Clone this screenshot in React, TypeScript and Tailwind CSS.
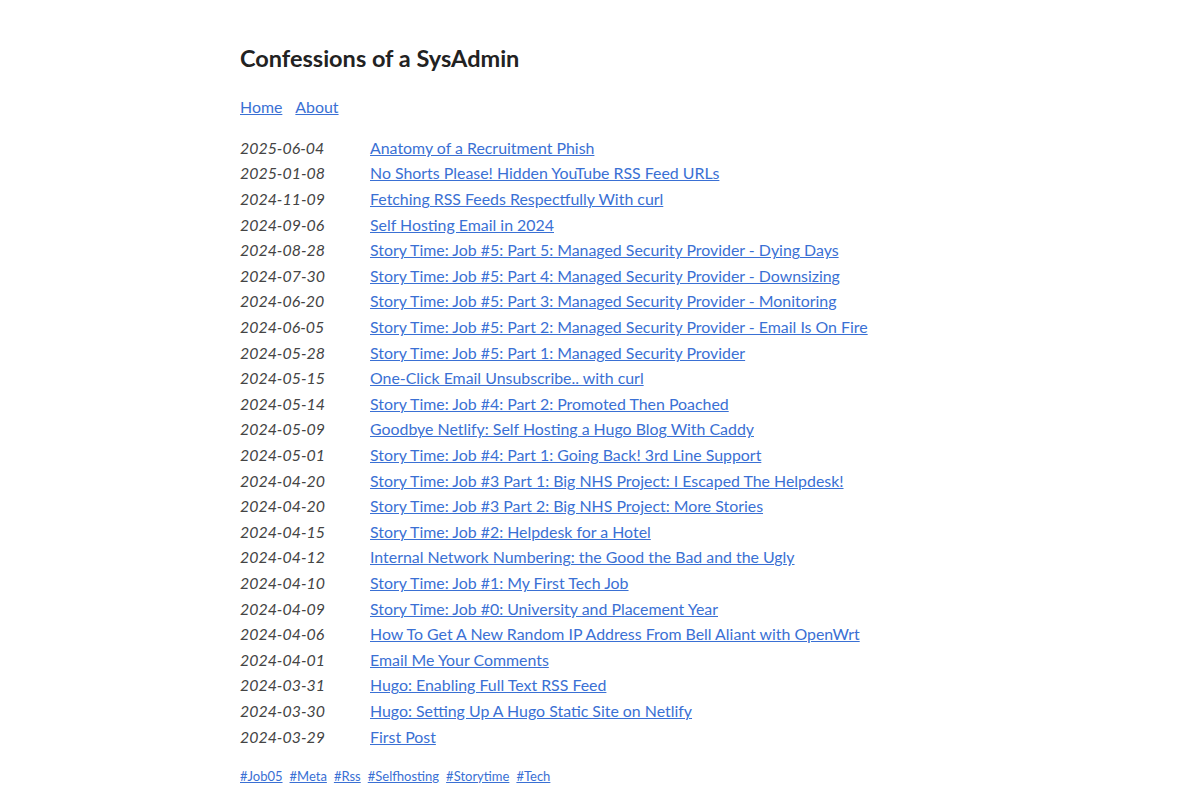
const posts: [string, string][] = [
  ["2025-06-04", "Anatomy of a Recruitment Phish"],
  ["2025-01-08", "No Shorts Please! Hidden YouTube RSS Feed URLs"],
  ["2024-11-09", "Fetching RSS Feeds Respectfully With curl"],
  ["2024-09-06", "Self Hosting Email in 2024"],
  ["2024-08-28", "Story Time: Job #5: Part 5: Managed Security Provider - Dying Days"],
  ["2024-07-30", "Story Time: Job #5: Part 4: Managed Security Provider - Downsizing"],
  ["2024-06-20", "Story Time: Job #5: Part 3: Managed Security Provider - Monitoring"],
  ["2024-06-05", "Story Time: Job #5: Part 2: Managed Security Provider - Email Is On Fire"],
  ["2024-05-28", "Story Time: Job #5: Part 1: Managed Security Provider"],
  ["2024-05-15", "One-Click Email Unsubscribe.. with curl"],
  ["2024-05-14", "Story Time: Job #4: Part 2: Promoted Then Poached"],
  ["2024-05-09", "Goodbye Netlify: Self Hosting a Hugo Blog With Caddy"],
  ["2024-05-01", "Story Time: Job #4: Part 1: Going Back! 3rd Line Support"],
  ["2024-04-20", "Story Time: Job #3 Part 1: Big NHS Project: I Escaped The Helpdesk!"],
  ["2024-04-20", "Story Time: Job #3 Part 2: Big NHS Project: More Stories"],
  ["2024-04-15", "Story Time: Job #2: Helpdesk for a Hotel"],
  ["2024-04-12", "Internal Network Numbering: the Good the Bad and the Ugly"],
  ["2024-04-10", "Story Time: Job #1: My First Tech Job"],
  ["2024-04-09", "Story Time: Job #0: University and Placement Year"],
  ["2024-04-06", "How To Get A New Random IP Address From Bell Aliant with OpenWrt"],
  ["2024-04-01", "Email Me Your Comments"],
  ["2024-03-31", "Hugo: Enabling Full Text RSS Feed"],
  ["2024-03-30", "Hugo: Setting Up A Hugo Static Site on Netlify"],
  ["2024-03-29", "First Post"],
];

const tags = ["#Job05", "#Meta", "#Rss", "#Selfhosting", "#Storytime", "#Tech"];

export default function App() {
  return (
    <div
      className="min-h-[800px] bg-white text-[#444] text-[15.9px] leading-[1.6]"
      style={{ fontFamily: "Lato, 'Noto Sans', sans-serif" }}
    >
      <div className="w-[720px] mx-auto pt-[44px]">
        <h1 className="text-[23.5px] font-bold leading-[1.25] text-[#222]">Confessions of a SysAdmin</h1>
        <nav className="mt-[21px] flex gap-[13px]">
          <a href="#" className="text-[#3a70d4] underline">Home</a>
          <a href="#" className="text-[#3a70d4] underline">About</a>
        </nav>
        <ul className="mt-[15px]">
          {posts.map(([d, t], i) => (
            <li key={i} className="flex h-[25.6px] items-center">
              <span className="w-[130px] shrink-0 italic">{d}</span>
              <a href="#" className="text-[#3a70d4] underline">{t}</a>
            </li>
          ))}
        </ul>
        <div className="mt-[17px] flex gap-[7px] text-[13px]">
          {tags.map((t) => (
            <a key={t} href="#" className="text-[#3a70d4] underline">{t}</a>
          ))}
        </div>
      </div>
    </div>
  );
}
